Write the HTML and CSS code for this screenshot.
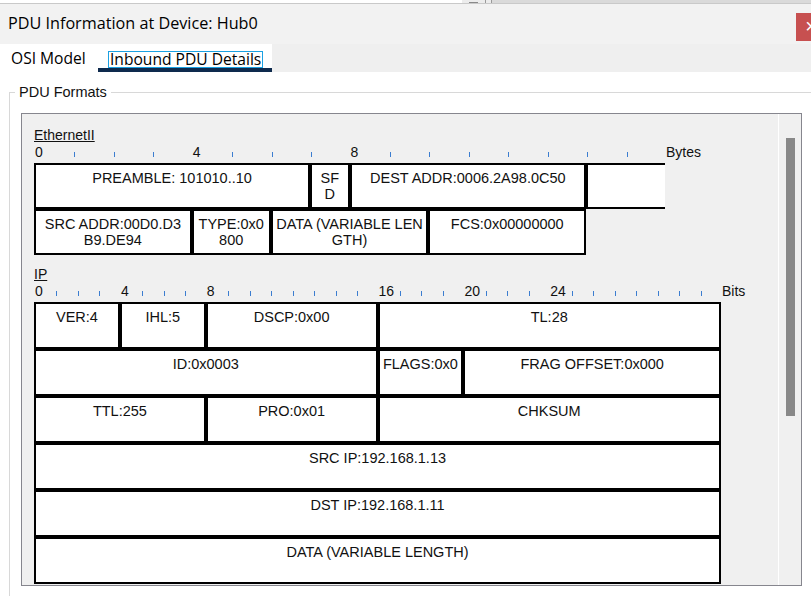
FILE: index.html
```html
<!DOCTYPE html>
<html>
<head>
<meta charset="utf-8">
<title>PDU Information at Device: Hub0</title>
<link rel="stylesheet" href="styles.css">
</head>
<body>
<div class="topstrip">
  <div class="ts-white"></div>
  <div class="ts-handle"><div class="ts-dash"></div></div>
  <div class="ts-line"></div>
  <div class="ts-gap"></div>
  <div class="ts-line"></div>
  <div class="ts-panel"></div>
</div>
<header class="titlebar">
  <span class="title">PDU Information at Device: Hub0</span>
  <div class="close">×</div>
</header>
<nav class="tabs">
  <div class="tab">OSI Model</div>
  <div class="tab active"><span class="focus">Inbound PDU Details</span></div>
</nav>
<main class="content">
  <fieldset class="group">
    <legend>PDU Formats</legend>
    <div class="panel">
      <div class="viewport">
        <section class="pdu">
          <div class="pdu-name">EthernetII</div>
          <div class="ruler">
            <div class="scale eth">
              <div class="mark"><span class="num">0</span></div>
              <div class="mark"><i class="tick"></i></div>
              <div class="mark"><i class="tick"></i></div>
              <div class="mark"><i class="tick"></i></div>
              <div class="mark"><span class="num">4</span></div>
              <div class="mark"><i class="tick"></i></div>
              <div class="mark"><i class="tick"></i></div>
              <div class="mark"><i class="tick"></i></div>
              <div class="mark"><span class="num">8</span></div>
              <div class="mark"><i class="tick"></i></div>
              <div class="mark"><i class="tick"></i></div>
              <div class="mark"><i class="tick"></i></div>
              <div class="mark"><i class="tick"></i></div>
              <div class="mark"><i class="tick"></i></div>
              <div class="mark"><i class="tick"></i></div>
              <div class="mark"><i class="tick"></i></div>
            </div>
            <span class="unit">Bytes</span>
          </div>
          <div class="fields eth">
            <div class="f s7">PREAMBLE: 101010..10</div>
            <div class="f s1">SF<br>D</div>
            <div class="f s6">DEST ADDR:0006.2A98.0C50</div>
            <div class="f s2 open"></div>
            <div class="f s4">SRC ADDR:00D0.D3<br>B9.DE94</div>
            <div class="f s2">TYPE:0x0<br>800</div>
            <div class="f s4">DATA (VARIABLE LEN<br>GTH)</div>
            <div class="f s4">FCS:0x00000000</div>
          </div>
        </section>
        <section class="pdu ip">
          <div class="pdu-name">IP</div>
          <div class="ruler">
            <div class="scale bits">
              <div class="mark"><span class="num">0</span></div>
              <div class="mark"><i class="tick"></i></div>
              <div class="mark"><i class="tick"></i></div>
              <div class="mark"><i class="tick"></i></div>
              <div class="mark"><span class="num">4</span></div>
              <div class="mark"><i class="tick"></i></div>
              <div class="mark"><i class="tick"></i></div>
              <div class="mark"><i class="tick"></i></div>
              <div class="mark"><span class="num">8</span></div>
              <div class="mark"><i class="tick"></i></div>
              <div class="mark"><i class="tick"></i></div>
              <div class="mark"><i class="tick"></i></div>
              <div class="mark"><i class="tick"></i></div>
              <div class="mark"><i class="tick"></i></div>
              <div class="mark"><i class="tick"></i></div>
              <div class="mark"><i class="tick"></i></div>
              <div class="mark"><span class="num">16</span></div>
              <div class="mark"><i class="tick"></i></div>
              <div class="mark"><i class="tick"></i></div>
              <div class="mark"><i class="tick"></i></div>
              <div class="mark"><span class="num">20</span></div>
              <div class="mark"><i class="tick"></i></div>
              <div class="mark"><i class="tick"></i></div>
              <div class="mark"><i class="tick"></i></div>
              <div class="mark"><span class="num">24</span></div>
              <div class="mark"><i class="tick"></i></div>
              <div class="mark"><i class="tick"></i></div>
              <div class="mark"><i class="tick"></i></div>
              <div class="mark"><i class="tick"></i></div>
              <div class="mark"><i class="tick"></i></div>
              <div class="mark"><i class="tick"></i></div>
              <div class="mark"><i class="tick"></i></div>
            </div>
            <span class="unit">Bits</span>
          </div>
          <div class="fields ipf">
            <div class="f s4">VER:4</div>
            <div class="f s4">IHL:5</div>
            <div class="f s8">DSCP:0x00</div>
            <div class="f s16">TL:28</div>
            <div class="f s16">ID:0x0003</div>
            <div class="f s4">FLAGS:0x0</div>
            <div class="f s12">FRAG OFFSET:0x000</div>
            <div class="f s8">TTL:255</div>
            <div class="f s8">PRO:0x01</div>
            <div class="f s16">CHKSUM</div>
            <div class="f s32">SRC IP:192.168.1.13</div>
            <div class="f s32">DST IP:192.168.1.11</div>
            <div class="f s32">DATA (VARIABLE LENGTH)</div>
          </div>
        </section>
      </div>
      <div class="scrollbar"><div class="thumb"></div></div>
    </div>
  </fieldset>
</main>
</body>
</html>
```

FILE: styles.css
```css
html, body {
  margin: 0;
  padding: 0;
}
body {
  width: 811px;
  height: 596px;
  overflow: hidden;
  background: #ffffff;
  font-family: "Liberation Sans", Arial, sans-serif;
  color: #000;
}

/* strip of the window behind */
.topstrip {
  height: 3px;
  display: flex;
  border-bottom: 1px solid #c9c9c9;
}
.ts-white { width: 462px; background: #ffffff; }
.ts-handle { width: 23px; background: #ececec; }
.ts-dash { width: 9px; height: 1px; margin: 2px 0 0 7px; background: #8a8a8a; }
.ts-line { width: 1px; background: #9a9a9a; }
.ts-gap { width: 5px; background: #ececec; }
.ts-panel { flex: 1; background: #dadada; }

/* title bar */
.titlebar {
  height: 40px;
  background: #f2f2f2;
  display: flex;
  justify-content: space-between;
  align-items: flex-start;
}
.title {
  font-family: "Open Sans", "Noto Sans", sans-serif;
  font-size: 16.2px;
  line-height: 22px;
  padding: 8px 0 0 8px;
  color: #000;
}
.close {
  width: 30px;
  height: 28px;
  margin: 9px -15px 0 0;
  background: #c75050;
  color: #fff;
  font-size: 20px;
  line-height: 26px;
  text-align: center;
}

/* tabs */
.tabs {
  height: 28px;
  background: #efefef;
  display: flex;
}
.tab {
  background: #ffffff;
  font-family: "Open Sans", "Noto Sans", sans-serif;
  font-size: 15.6px;
  line-height: 17px;
  padding: 6px 0 0 11px;
  width: 87px;
  box-sizing: content-box;
  height: 22px;
  white-space: nowrap;
}
.tab.active {
  width: 164px;
  padding: 7px 0 0 10px;
  height: 17px;
  border-bottom: 4px solid #0e2a4d;
}
.focus {
  display: inline-block;
  border: 1px solid #1ba1e2;
  padding: 0 1px 0 1px;
  line-height: 15px;
}

/* group box */
.content {
  display: block;
}
.group {
  margin: 12px -20px 0 9px;
  padding: 12px 0 30px 11px;
  border: 1px solid #d8d8d8;
  min-width: 0;
}
.group legend {
  font-size: 14.5px;
  line-height: 17px;
  padding: 0 4px;
  margin-left: -6px;
  color: #111;
}

.panel {
  width: 781px;
  height: 473px;
  box-sizing: border-box;
  border: 1px solid #86868e;
  background: #f0f0f0;
  display: flex;
}
.viewport {
  flex: 1;
  border-right: 1px solid #ffffff;
  padding: 13px 0 0 12px;
  overflow: hidden;
}
.scrollbar {
  width: 22px;
  background: #f0f0f0;
}
.thumb {
  width: 9px;
  height: 278px;
  margin: 24px 0 0 7px;
  background: #888888;
}

/* pdu sections */
.pdu-name {
  font-size: 14px;
  line-height: 16px;
  text-decoration: underline;
  color: #111;
}
.pdu.ip {
  margin-top: 11px;
}
.ruler {
  display: flex;
  margin-top: 1px;
  margin-left: 1px;
  height: 16px;
  font-size: 14px;
  line-height: 16px;
  color: #111;
}
.scale {
  display: grid;
  height: 16px;
}
.scale.eth {
  width: 631px;
  grid-template-columns: repeat(16, 1fr);
}
.scale.bits {
  width: 687px;
  grid-template-columns: repeat(32, 1fr);
}
.mark {
  display: flex;
  align-items: flex-end;
  overflow: visible;
  white-space: nowrap;
}
.num {
  align-self: flex-start;
}
.tick {
  display: block;
  width: 1px;
  height: 5px;
  margin-bottom: 3px;
  background: #3b7dd0;
}
.unit {
  white-space: nowrap;
}

/* field tables */
.fields {
  display: grid;
  margin-top: 3px;
  font-size: 14.5px;
  line-height: 16px;
  color: #111;
}
.fields.eth {
  width: 631px;
  grid-template-columns: repeat(16, 1fr);
  grid-auto-rows: 46px;
}
.fields.ipf {
  width: 687px;
  grid-template-columns: repeat(32, 1fr);
  grid-auto-rows: 47px;
}
.f {
  border: 2px solid #000;
  background: #ffffff;
  text-align: center;
  padding-top: 5px;
  white-space: nowrap;
  overflow: hidden;
}
.f.open { border-right: none; }
.s1 { grid-column: span 1; }
.s2 { grid-column: span 2; }
.s4 { grid-column: span 4; }
.s6 { grid-column: span 6; }
.s7 { grid-column: span 7; }
.s8 { grid-column: span 8; }
.s12 { grid-column: span 12; }
.s16 { grid-column: span 16; }
.s32 { grid-column: span 32; }
```
